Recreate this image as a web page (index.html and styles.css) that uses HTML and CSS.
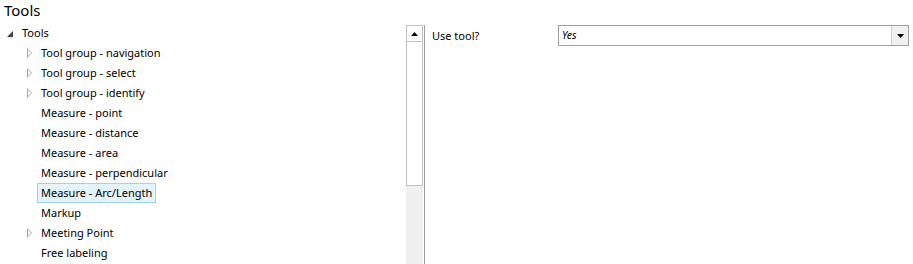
FILE: index.html
```html
<!DOCTYPE html>
<html>
<head>
<meta charset="utf-8">
<link rel="stylesheet" href="styles.css">
</head>
<body>
<div class="title">Tools</div>
<div class="main">
  <div class="tree">
    <div class="row lvl0"><span class="exp open"></span><span class="label">Tools</span></div>
    <div class="row lvl1"><span class="exp closed"></span><span class="label">Tool group - navigation</span></div>
    <div class="row lvl1"><span class="exp closed"></span><span class="label">Tool group - select</span></div>
    <div class="row lvl1"><span class="exp closed"></span><span class="label">Tool group - identify</span></div>
    <div class="row lvl1"><span class="exp"></span><span class="label">Measure - point</span></div>
    <div class="row lvl1"><span class="exp"></span><span class="label">Measure - distance</span></div>
    <div class="row lvl1"><span class="exp"></span><span class="label">Measure - area</span></div>
    <div class="row lvl1"><span class="exp"></span><span class="label">Measure - perpendicular</span></div>
    <div class="row lvl1"><span class="exp"></span><span class="label selected">Measure - Arc/Length</span></div>
    <div class="row lvl1"><span class="exp"></span><span class="label">Markup</span></div>
    <div class="row lvl1"><span class="exp closed"></span><span class="label">Meeting Point</span></div>
    <div class="row lvl1"><span class="exp"></span><span class="label">Free labeling</span></div>
  </div>
  <div class="scrollbar">
    <div class="sb-btn"><svg width="7" height="4" viewBox="0 0 7 4"><path d="M0 4 L3.5 0 L7 4 Z" fill="#000"/></svg></div>
    <div class="sb-thumb"></div>
    <div class="sb-track"></div>
  </div>
  <div class="splitter"></div>
  <div class="props">
    <div class="prop-row">
      <div class="prop-name">Use tool?</div>
      <div class="combo">
        <div class="combo-value">Yes</div>
        <div class="combo-btn"><svg width="7" height="4" viewBox="0 0 7 4"><path d="M0 0 L7 0 L3.5 4 Z" fill="#000"/></svg></div>
      </div>
    </div>
  </div>
</div>
</body>
</html>
```
FILE: styles.css
```css
html, body {
  margin: 0;
  padding: 0;
  background: #fff;
  width: 913px;
  height: 264px;
  overflow: hidden;
  font-family: "Noto Sans", "Open Sans", sans-serif;
  font-size: 11px;
  color: #000;
}
.title {
  height: 22px;
  padding-left: 4px;
  font-size: 15px;
  line-height: 21px;
  color: #000;
}
.main {
  display: flex;
  height: 242px;
}
.tree {
  width: 406px;
  flex: none;
  padding-top: 1px;
}
.row {
  height: 20px;
  display: flex;
  align-items: center;
}
.lvl0 { padding-left: 5px; }
.lvl1 { padding-left: 24px; }
.exp {
  width: 13px;
  height: 20px;
  flex: none;
  position: relative;
}
.exp.open::before {
  content: "";
  position: absolute;
  left: 2px;
  top: 8px;
  width: 0;
  height: 0;
  border-left: 6px solid transparent;
  border-bottom: 6px solid #444;
}
.exp.closed::before {
  content: "";
  position: absolute;
  left: 3px;
  top: 5px;
  width: 0;
  height: 0;
  border-top: 5px solid transparent;
  border-bottom: 5px solid transparent;
  border-left: 5px solid #a6a6a6;
}
.exp.closed::after {
  content: "";
  position: absolute;
  left: 4px;
  top: 7px;
  width: 0;
  height: 0;
  border-top: 3px solid transparent;
  border-bottom: 3px solid transparent;
  border-left: 3px solid #fff;
}
.label {
  padding: 0 3px;
  height: 18px;
  line-height: 18px;
  border: 1px solid transparent;
  white-space: nowrap;
}
.label.selected {
  background: #e5f3fb;
  border-color: #99d1ff;
}
.scrollbar {
  width: 17px;
  flex: none;
  margin-top: 3px;
  display: flex;
  flex-direction: column;
}
.sb-btn {
  height: 15px;
  border: 1px solid #c0c0c0;
  background: #fff;
  display: flex;
  align-items: center;
  justify-content: center;
}
.sb-thumb {
  height: 143px;
  border: 1px solid #c0c0c0;
  border-top: 0;
  background: #fff;
}
.sb-track {
  flex: 1;
  background: #f0f0f0;
}
.splitter {
  width: 1px;
  flex: none;
  margin-left: 1px;
  margin-top: 3px;
  background: #a0a0a0;
}
.props {
  flex: 1;
  padding-left: 7px;
  padding-top: 3px;
}
.prop-row {
  display: flex;
  align-items: center;
  height: 21px;
}
.prop-name {
  width: 126px;
  flex: none;
}
.combo {
  width: 349px;
  height: 19px;
  border: 1px solid #a0a0a0;
  display: flex;
  align-items: stretch;
}
.combo-value {
  flex: 1;
  font-style: italic;
  font-size: 10.5px;
  line-height: 19px;
  padding-left: 3px;
}
.combo-btn {
  width: 16px;
  background: #f0f0f0;
  border-left: 1px solid #d0d0d0;
  display: flex;
  align-items: center;
  justify-content: center;
}
```
